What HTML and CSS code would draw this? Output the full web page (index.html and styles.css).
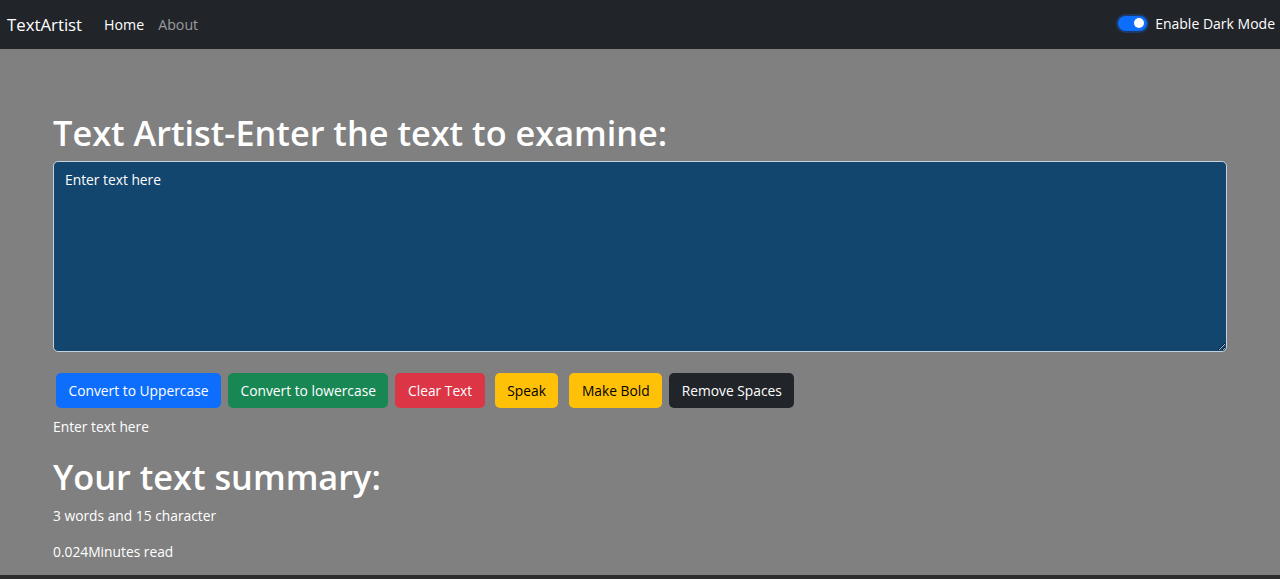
FILE: index.html
```html
<!DOCTYPE html>
<html lang="en">
<head>
<meta charset="utf-8">
<title>TextArtist</title>
<link rel="stylesheet" href="styles.css">
</head>
<body>
<nav class="navbar">
  <a class="brand" href="#">TextArtist</a>
  <ul class="nav-links">
    <li><a class="nav-link active" href="#">Home</a></li>
    <li><a class="nav-link" href="#">About</a></li>
  </ul>
  <label class="switch">
    <span class="switch-track"><span class="switch-knob"></span></span>
    <span class="switch-label">Enable Dark Mode</span>
  </label>
</nav>
<main class="page">
  <div class="container">
    <h1 class="title">Text Artist-Enter the text to examine:</h1>
    <textarea class="text-input" rows="8">Enter text here</textarea>
    <div class="actions">
      <button class="btn btn-primary">Convert to Uppercase</button>
      <button class="btn btn-success">Convert to lowercase</button>
      <button class="btn btn-danger">Clear Text</button>
      <button class="btn btn-warning btn-speak">Speak</button>
      <button class="btn btn-warning btn-bold">Make Bold</button>
      <button class="btn btn-dark">Remove Spaces</button>
    </div>
    <p class="preview">Enter text here</p>
    <h1 class="title summary-title">Your text summary:</h1>
    <p class="stat">3 words and 15 character</p>
    <p class="stat">0.024Minutes read</p>
  </div>
</main>
</body>
</html>
```
FILE: styles.css
```css
* { box-sizing: border-box; }
html, body { margin: 0; padding: 0; }
body {
  background: #2d2d2d;
  font-family: "Open Sans", "Noto Sans", sans-serif;
  font-size: 13.8px;
  color: #fff;
  height: 579px;
  overflow: hidden;
}
.navbar {
  height: 49px;
  background: #212529;
  display: flex;
  align-items: center;
  padding: 0 5px 0 7px;
}
.brand {
  color: #fff;
  text-decoration: none;
  font-size: 16.8px;
  margin-right: 15px;
}
.nav-links {
  list-style: none;
  display: flex;
  margin: 0;
  padding: 0;
  flex: 1;
}
.nav-link {
  display: block;
  padding: 4px 7px;
  color: rgba(255,255,255,0.55);
  text-decoration: none;
  font-size: 14.2px;
}
.nav-link.active { color: #fff; }
.switch {
  display: flex;
  align-items: center;
  gap: 8px;
  margin-top: -3px;
}
.switch-track {
  width: 29px;
  height: 15px;
  border-radius: 8px;
  background: #0d6efd;
  box-shadow: 0 0 0 2px rgba(13,110,253,0.3);
  display: flex;
  align-items: center;
  justify-content: flex-end;
  padding-right: 3px;
}
.switch-knob {
  width: 10px;
  height: 10px;
  border-radius: 50%;
  background: #fff;
}
.switch-label { font-size: 14px; }
.page {
  background: #808080;
  height: 526px;
}
.container {
  padding: 62px 53px 0 53px;
}
.title {
  margin: 0 0 7px 0;
  font-size: 34.3px;
  line-height: 43px;
  font-weight: 600;
}
.text-input {
  display: block;
  width: 100%;
  height: 191px;
  background: #13466e;
  color: #fff;
  border: 1px solid #c5d2dd;
  border-radius: 5px;
  padding: 7px 11px;
  font-family: inherit;
  font-size: 13.8px;
  line-height: 21px;
  margin: 0 0 21px 0;
}
.actions {
  display: flex;
  align-items: center;
  padding-left: 3px;
  margin-bottom: 8px;
}
.btn {
  height: 35px;
  border: none;
  border-radius: 5px;
  padding: 0 12.5px;
  font-family: inherit;
  font-size: 13.8px;
  color: #fff;
  margin-right: 7px;
}
.btn-primary { background: #0d6efd; }
.btn-success { background: #198754; }
.btn-danger { background: #dc3545; margin-right: 10px; }
.btn-warning { background: #ffc107; color: #000; }
.btn-speak { margin-right: 11px; }
.btn-dark { background: #212529; }
.preview {
  margin: 0 0 17px 0;
  line-height: 22px;
}
.stat {
  margin: 0 0 14px 0;
  line-height: 22px;
}
```
